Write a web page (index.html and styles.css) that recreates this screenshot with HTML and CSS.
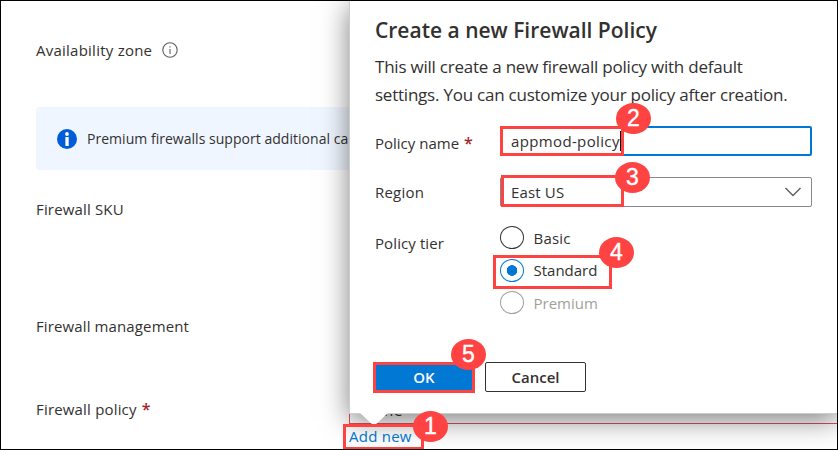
FILE: index.html
```html
<!DOCTYPE html>
<html lang="en">
<head>
<meta charset="utf-8">
<title>Create a firewall</title>
<link rel="stylesheet" href="styles.css">
</head>
<body>
<div class="page">
  <main class="form">
    <div class="row zone"><span class="label t-zone">Availability zone</span>
      <svg class="hint" viewBox="0 0 16 16"><circle cx="8" cy="8" r="7.2"/><path d="M8 7v5M8 4.3v1.2"/></svg>
    </div>
    <div class="banner">
      <svg class="info" viewBox="0 0 20 20"><circle cx="10" cy="10" r="10"/><rect x="8.4" y="8" width="3.3" height="9"/><circle class="dot" cx="10" cy="5" r="1.9"/></svg>
      <span class="label t-banner">Premium firewalls support additional ca</span>
    </div>
    <div class="row sku"><span class="label t-sku">Firewall SKU</span></div>
    <div class="row management"><span class="label t-management">Firewall management</span></div>
    <div class="row policy">
      <span class="label t-policy">Firewall policy</span><span class="star">*</span>
      <div class="picker">None</div>
    </div>
    <div class="add"><a class="link">Add new</a></div>
  </main>

  <section class="callout">
    <h1 class="title"><span>Create a new Firewall Policy</span></h1>
    <p class="intro"><span class="t-intro1">This will create a new firewall policy with default</span><br><span class="t-intro2">settings. You can customize your policy after creation.</span></p>
    <div class="field name">
      <span class="label t-name">Policy name</span><span class="star">*</span>
      <div class="box input"><span class="t-value">appmod-policy</span><i class="caret"></i></div>
    </div>
    <div class="field region">
      <span class="label t-region">Region</span>
      <div class="box select"><span class="t-east">East US</span>
        <svg class="chevron" viewBox="0 0 16 10"><path d="M0.5 1L8 8.6L15.5 1"/></svg>
      </div>
    </div>
    <div class="field tier">
      <span class="label t-tier">Policy tier</span>
      <div class="options">
        <div class="option"><i class="radio"></i><span class="t-basic">Basic</span></div>
        <div class="option"><i class="radio on"></i><span class="t-standard">Standard</span></div>
        <div class="option off"><i class="radio"></i><span class="t-premium">Premium</span></div>
      </div>
    </div>
    <div class="actions">
      <div class="button primary"><span>OK</span></div>
      <div class="button"><span class="t-cancel">Cancel</span></div>
    </div>
    <svg class="beak" viewBox="0 0 28 14"><path d="M0 0H28L14 13Z"/></svg>
  </section>

  <div class="mark m1"></div><div class="mark m2"></div><div class="mark m3"></div><div class="mark m4"></div><div class="mark m5"></div>
  <div class="badge b1">1</div><div class="badge b2">2</div><div class="badge b3">3</div><div class="badge b4">4</div><div class="badge b5">5</div>
</div>
</body>
</html>
```
FILE: styles.css
```css
* { box-sizing: border-box; }
body { margin: 0; font: 15px/20px "Open Sans", sans-serif; color: #323130; }
.page { position: relative; width: 838px; height: 450px; overflow: hidden; background: #fff; }
.page::after { content: ""; position: absolute; inset: 0; border: 1px solid #000; }
span, .link { white-space: nowrap; }
.form { display: flex; flex-direction: column; padding: 40px 0 0 36px; }
.row { display: flex; height: 20px; }
.zone { align-items: center; }
.t-zone { letter-spacing: .24px; }
.hint { width: 16px; height: 16px; margin-left: 10px; fill: none; stroke: #605e5c; stroke-width: 1.1; }
.banner { display: flex; align-items: center; width: 314px; height: 63px; margin-top: 47px; padding-left: 21px; background: #f0f6ff; border-radius: 3px 0 0 3px; overflow: hidden; }
.t-banner { font-size: 14px; letter-spacing: .03px; }
.info { flex: none; width: 20px; height: 20px; margin-right: 10px; fill: #015cda; }
.info rect, .info .dot { fill: #fff; }
.sku { margin-top: 29px; }
.t-sku { letter-spacing: .16px; }
.management { margin-top: 97px; }
.t-management { letter-spacing: .12px; }
.policy { margin-top: 63px; }
.t-policy { letter-spacing: .18px; }
.star { color: #a4262c; font-size: 16px; font-weight: 600; margin-left: 5px; }
.picker { position: absolute; left: 349px; top: 394px; width: 500px; height: 30px; padding: 5px 12px; border: 1px solid #dc5060; letter-spacing: .8px; }
.add { margin: 7px 0 0 313px; }
.link { color: #0078d4; letter-spacing: .25px; }

.callout { position: absolute; left: 349px; top: 0; width: 489px; height: 414px; padding: 15px 26px 0 25px; background: #fff; border: 1px solid #ccc; box-shadow: 0 6px 26px rgba(0,0,0,.5); }
.title { margin: 0; font-size: 21px; line-height: 28px; font-weight: 600; }
.intro { margin: 9px 0 0; font-size: 17px; line-height: 28px; letter-spacing: -.23px; }
.field { display: grid; grid-template-columns: auto 1fr 312px; width: 437px; }
.field .box, .options { grid-column: 3; }
.name { margin-top: 17px; align-items: center; }
.name > .label { margin-top: 3px; }
.name > .star { margin-top: 4px; }
.region { margin-top: 21px; align-items: center; }
.t-region { letter-spacing: .2px; }
.box { display: flex; align-items: center; height: 30px; padding-left: 9px; border: 2px solid #0078d4; border-radius: 2px; }
.t-value { letter-spacing: .36px; }
.t-east { letter-spacing: .15px; }
.select { justify-content: space-between; padding: 0 10px; border: 1px solid #8a8886; }
.caret { width: 1px; height: 20px; background: #000; }
.chevron { width: 16px; height: 10px; fill: none; stroke: #605e5c; stroke-width: 1.4; }
.tier { margin-top: 19px; }
.t-tier { margin-top: 7px; letter-spacing: .1px; }
.options { display: flex; flex-direction: column; gap: 9.7px; }
.option { display: flex; align-items: center; gap: 9.5px; height: 23px; }
.t-basic { letter-spacing: .2px; }
.radio { width: 24px; height: 23px; border: 1px solid #323130; border-radius: 50%; }
.radio.on { border-color: #0078d4; background: radial-gradient(circle, #0078d4 5px, transparent 5.6px); }
.off { color: #a19f9d; }
.off .radio { border-color: #a19f9d; }
.actions { display: flex; gap: 11px; margin-top: 48px; margin-left: -1px; }
.button { display: flex; align-items: center; justify-content: center; width: 101px; height: 30px; border: 1px solid #323130; border-radius: 2px; font-weight: 600; }
.primary { width: 100px; background: #0078d4; border: 0; color: #fff; }
.beak { position: absolute; left: 10px; top: 412px; width: 28px; height: 14px; fill: #fff; }

.mark { position: absolute; border: 3px solid #ff4242; }
.m1 { left: 343px; top: 424px; width: 81px; height: 26px; }
.m2 { left: 500px; top: 126px; width: 124px; height: 30px; }
.m3 { left: 501px; top: 175px; width: 123px; height: 32px; }
.m4 { left: 493px; top: 255px; width: 119px; height: 34px; }
.m5 { left: 373px; top: 362px; width: 102px; height: 31px; }
.badge { position: absolute; width: 35px; height: 31px; border-radius: 50%; background: #ff4242; color: #fff; font: 23px/31px "Liberation Sans", sans-serif; text-align: center; -webkit-text-stroke: .4px #fff; }
.b1 { left: 413px; top: 411px; }
.b2 { left: 616px; top: 103px; }
.b3 { left: 615px; top: 162px; }
.b4 { left: 599px; top: 237px; }
.b5 { left: 451px; top: 339px; }
```
